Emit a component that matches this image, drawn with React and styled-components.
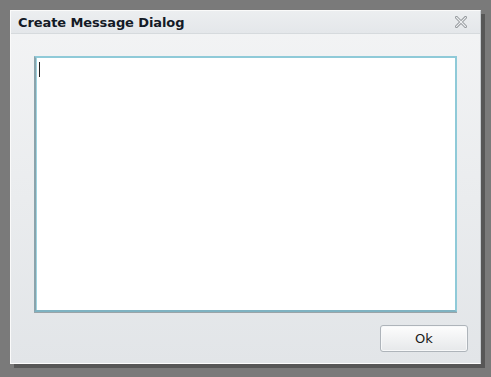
import React, { useState } from 'react';
import styled, { createGlobalStyle } from 'styled-components';

const GlobalStyle = createGlobalStyle`
  html, body {
    margin: 0;
    padding: 0;
    background: #7a7a7a;
    font-family: "DejaVu Sans", Verdana, sans-serif;
  }
`;

const Backdrop = styled.div`
  width: 491px;
  height: 377px;
  padding: 10px 0 0 10px;
  box-sizing: border-box;
`;

const Dialog = styled.div`
  width: 471px;
  height: 354px;
  display: flex;
  flex-direction: column;
  background: linear-gradient(#f3f4f5, #e2e5e8);
  border-top: 1px solid #fafafa;
  border-left: 1px solid #fafafa;
  border-right: 1px solid #c8ccd0;
  border-bottom: 1px solid #fdfdfd;
  box-sizing: border-box;
  box-shadow: 4px 4px 0 #575757;
`;

const TitleBar = styled.div`
  flex-shrink: 0;
  height: 22px;
  display: flex;
  align-items: center;
  justify-content: space-between;
  padding: 0 12px 0 7px;
  background: linear-gradient(#eceef0, #e4e7ea);
  border-bottom: 1px solid #d6dadd;
`;

const Title = styled.span`
  font-size: 13px;
  font-weight: bold;
  color: #141a26;
  letter-spacing: -0.1px;
  padding-top: 1px;
`;

const CloseButton = styled.button`
  width: 14px;
  height: 14px;
  padding: 0;
  border: none;
  background: none;
  display: flex;
  align-items: center;
  justify-content: center;
  cursor: pointer;
`;

const Body = styled.div`
  flex: 1;
  display: flex;
  flex-direction: column;
  padding: 22px 12px 11px 23px;
`;

const BoxWrap = styled.div`
  position: relative;
  width: 423px;
  height: 256px;
`;

const MessageBox = styled.textarea`
  display: block;
  width: 423px;
  height: 256px;
  box-sizing: border-box;
  resize: none;
  outline: none;
  margin: 0;
  padding: 4px 5px;
  font-family: "DejaVu Sans", sans-serif;
  font-size: 13px;
  background: #fff;
  border: 2px solid #8fcad8;
  border-left-color: #8aa3ab;
  border-bottom-color: #7fb3c2;
  box-shadow: inset 1px 0 0 #9fd3df, 0 1px 0 #9aa4a8;
  caret-color: #222;
`;

const Caret = styled.span`
  position: absolute;
  left: 5px;
  top: 6px;
  width: 1px;
  height: 15px;
  background: #222;
`;

const Footer = styled.div`
  display: flex;
  justify-content: flex-end;
  margin-top: 13px;
`;

const Button = styled.button`
  width: 88px;
  height: 27px;
  border: 1px solid #aeb4ba;
  border-radius: 3px;
  background: linear-gradient(#fdfdfd, #e6e8ea);
  box-shadow: inset 0 0 0 1px #f7f8f9;
  font-family: "DejaVu Sans", sans-serif;
  font-size: 13px;
  color: #1a1a1a;
  cursor: pointer;
`;

const CloseIcon = () => (
  <svg width="12" height="12" viewBox="0 0 12 12">
    <path
      d="M1.5 1.5 L10.5 10.5 M10.5 1.5 L1.5 10.5"
      stroke="#8f9397"
      strokeWidth="3"
      strokeLinecap="square"
      fill="none"
    />
    <path
      d="M1.5 1.5 L10.5 10.5 M10.5 1.5 L1.5 10.5"
      stroke="#eef0f2"
      strokeWidth="1.2"
      strokeLinecap="square"
      fill="none"
    />
  </svg>
);

const App = () => {
  const [message, setMessage] = useState('');

  return (
    <Backdrop>
      <GlobalStyle />
      <Dialog>
        <TitleBar>
          <Title>Create Message Dialog</Title>
          <CloseButton aria-label="Close">
            <CloseIcon />
          </CloseButton>
        </TitleBar>
        <Body>
          <BoxWrap>
            <MessageBox value={message} onChange={(e) => setMessage(e.target.value)} />
            {message === '' && <Caret />}
          </BoxWrap>
          <Footer>
            <Button>Ok</Button>
          </Footer>
        </Body>
      </Dialog>
    </Backdrop>
  );
};

export default App;
